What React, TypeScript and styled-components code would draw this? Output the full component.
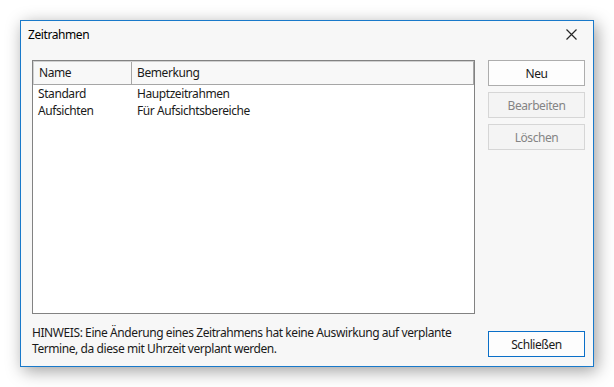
import React from 'react';
import styled, { createGlobalStyle } from 'styled-components';

const GlobalStyle = createGlobalStyle`
  html, body {
    margin: 0;
    padding: 0;
    background: #ffffff;
  }
  body {
    font-family: "Noto Sans", "Open Sans", sans-serif;
    font-size: 12px;
    letter-spacing: -0.42px;
    color: #1a1a1a;
  }
`;

const Page = styled.div`
  padding: 20px;
`;

const Window = styled.div`
  width: 574px;
  height: 347px;
  box-sizing: border-box;
  border: 1px solid #1979ca;
  background: #f7f7f7;
  box-shadow: 3px 4px 16px rgba(0, 0, 0, 0.38);
  display: flex;
  flex-direction: column;
`;

const TitleBar = styled.div`
  height: 27px;
  display: flex;
  align-items: center;
  justify-content: space-between;
  padding: 0 16px 0 7px;
`;

const Title = styled.span`
  font-size: 12px;
  color: #000;
`;

const CloseButton = styled.button`
  border: none;
  background: transparent;
  padding: 0;
  width: 12px;
  height: 12px;
  display: flex;
  align-items: center;
  justify-content: center;
`;

const Content = styled.div`
  flex: 1;
  display: grid;
  grid-template-columns: 443px 97px;
  column-gap: 13px;
  padding: 12px 8px 9px 11px;
  min-height: 0;
`;

const LeftColumn = styled.div`
  display: flex;
  flex-direction: column;
  min-height: 0;
`;

const ListBox = styled.div`
  flex: 1;
  border: 1px solid #828282;
  background: #fff;
  display: flex;
  flex-direction: column;
`;

const HeaderRow = styled.div`
  display: grid;
  grid-template-columns: 98px 1fr;
  height: 22px;
  background: #f8f8f8;
  border: 1px solid #a6a6a6;
  border-top-color: #d0d0d0;
  border-left-color: #d0d0d0;
`;

const HeaderCell = styled.div<{ $last?: boolean }>`
  display: flex;
  align-items: center;
  padding-left: 5px;
  padding-bottom: 1px;
  color: #1a1a1a;
  border-right: ${(p) => (p.$last ? 'none' : '1px solid #a6a6a6')};
`;

const Rows = styled.div``;

const Row = styled.div`
  display: grid;
  grid-template-columns: 99px 1fr;
  height: 17px;
  align-items: center;
`;

const Cell = styled.div`
  padding-left: 5px;
  white-space: nowrap;
`;

const Note = styled.p`
  margin: 11px 0 0;
  line-height: 16px;
  white-space: nowrap;
  color: #1a1a1a;
`;

const RightColumn = styled.div`
  display: flex;
  flex-direction: column;
  gap: 6px;
`;

const Button = styled.button<{ $variant?: 'normal' | 'disabled' | 'default' }>`
  height: 26px;
  box-sizing: border-box;
  font-family: inherit;
  font-size: 12px;
  letter-spacing: inherit;
  padding: 0;
  background: ${(p) => (p.$variant === 'disabled' ? '#f4f4f4' : '#fdfdfd')};
  color: ${(p) => (p.$variant === 'disabled' ? '#848484' : '#1a1a1a')};
  border: 1px solid
    ${(p) =>
      p.$variant === 'disabled' ? '#d6d6d6' : p.$variant === 'default' ? '#0a6fc8' : '#adadad'};
`;

const Spacer = styled.div`
  flex: 1;
`;

const CloseIcon = () => (
  <svg width="11" height="11" viewBox="0 0 11 11">
    <path d="M0.5 0.5 L10.5 10.5 M10.5 0.5 L0.5 10.5" stroke="#262626" strokeWidth="1.2" />
  </svg>
);

const entries = [
  { name: 'Standard', remark: 'Hauptzeitrahmen' },
  { name: 'Aufsichten', remark: 'Für Aufsichtsbereiche' },
];

const App: React.FC = () => {
  return (
    <Page>
      <GlobalStyle />
      <Window>
        <TitleBar>
          <Title>Zeitrahmen</Title>
          <CloseButton aria-label="Schließen">
            <CloseIcon />
          </CloseButton>
        </TitleBar>
        <Content>
          <LeftColumn>
            <ListBox>
              <HeaderRow>
                <HeaderCell>Name</HeaderCell>
                <HeaderCell $last>Bemerkung</HeaderCell>
              </HeaderRow>
              <Rows>
                {entries.map((e) => (
                  <Row key={e.name}>
                    <Cell>{e.name}</Cell>
                    <Cell>{e.remark}</Cell>
                  </Row>
                ))}
              </Rows>
            </ListBox>
            <Note>
              HINWEIS: Eine Änderung eines Zeitrahmens hat keine Auswirkung auf verplante
              <br />
              Termine, da diese mit Uhrzeit verplant werden.
            </Note>
          </LeftColumn>
          <RightColumn>
            <Button>Neu</Button>
            <Button $variant="disabled">Bearbeiten</Button>
            <Button $variant="disabled">Löschen</Button>
            <Spacer />
            <Button $variant="default">Schließen</Button>
          </RightColumn>
        </Content>
      </Window>
    </Page>
  );
};

export default App;
